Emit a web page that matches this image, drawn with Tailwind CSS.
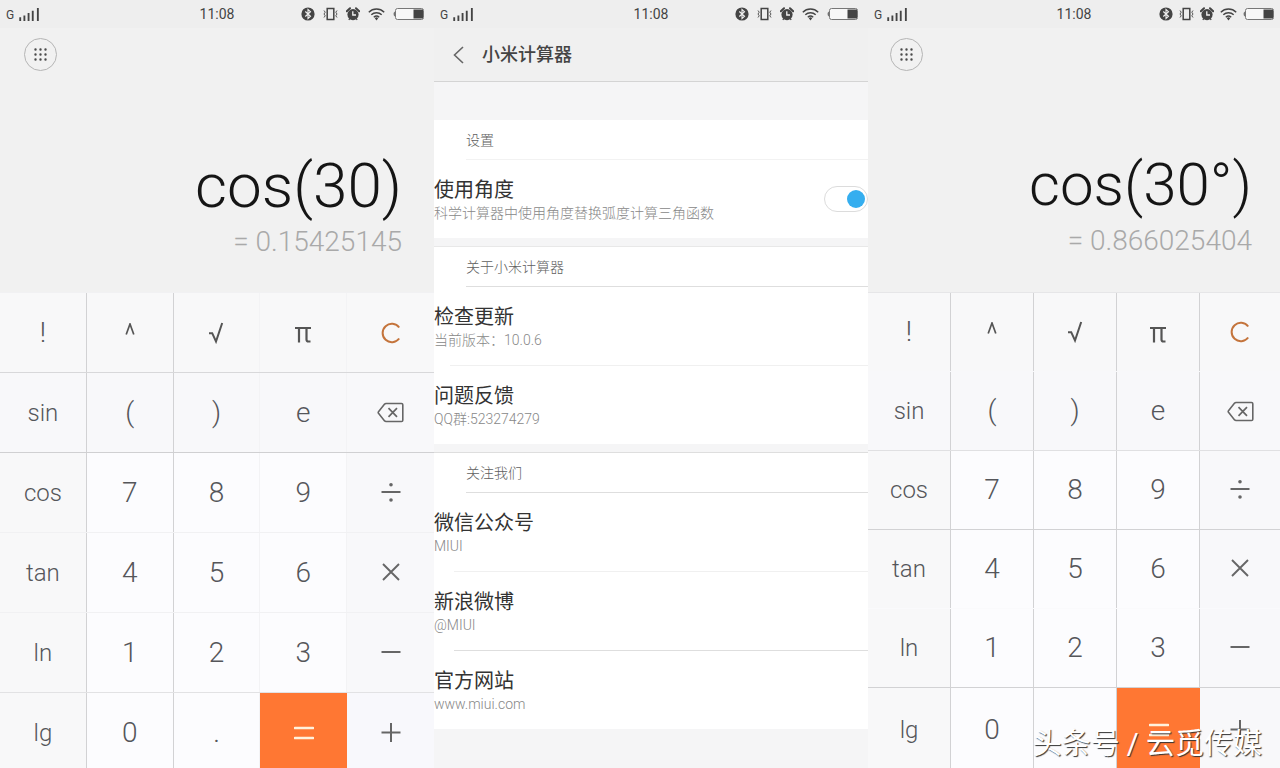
<!DOCTYPE html>
<html lang="zh-CN">
<head>
  <meta charset="UTF-8">
  <meta name="viewport" content="width=device-width, initial-scale=1.0">
  <title>小米计算器</title>
  <script src="https://cdn.jsdelivr.net/npm/@tailwindcss/browser@4"></script>
</head>
<body class="h-screen overflow-hidden bg-[#f1f1f1] font-['Roboto','Noto_Sans_CJK_SC',sans-serif] font-light text-[#55565a]">

  <!-- shared icons -->
  <svg class="hidden">
    <symbol id="signal" viewBox="0 0 23 14">
      <path d="M1.5 14v-4M6 14V8M10.500 14V5.500M15 14V3M20.500 14V0" fill="none" stroke="#444" stroke-width="2"/>
    </symbol>
    <symbol id="bluetooth" viewBox="0 0 14 14">
      <circle cx="7" cy="7" r="6.600" fill="#444"/>
      <path d="M4.300 4.500l5.200 4.800L7 11.500v-9l2.500 2.200-5.200 4.800" fill="none" stroke="#f1f1f1" stroke-width="1.100"/>
    </symbol>
    <symbol id="vibrate" viewBox="0 0 15 14">
      <rect x="4.200" y="1.500" width="6.600" height="11" fill="none" stroke="#444" stroke-width="1.500"/>
      <path d="M1 3.500l1.200 1.700L1 7l1.200 1.800L1 10.500M14 3.500l-1.200 1.700L14 7l-1.200 1.800L14 10.500" fill="none" stroke="#555" stroke-width="1"/>
    </symbol>
    <symbol id="alarm" viewBox="0 0 14 14">
      <circle cx="7" cy="7.600" r="5.600" fill="#444"/>
      <path d="M.8 4.200L4 1.200M13.200 4.200L10 1.200" stroke="#444" stroke-width="2" stroke-linecap="round"/>
      <path d="M2.800 12.800l1-1.200M11.200 12.800l-1-1.200" stroke="#444" stroke-width="1.300"/>
      <path d="M6.800 4.300v3.700h3.200" fill="none" stroke="#f1f1f1" stroke-width="1.300"/>
    </symbol>
    <symbol id="wifi" viewBox="0 0 17 14">
      <path d="M.8 5.200a11 11 0 0 1 15.400 0M3.300 7.800a7.500 7.500 0 0 1 10.400 0M5.800 10.200a4 4 0 0 1 5.400 0" fill="none" stroke="#444" stroke-width="1.400"/>
      <path d="M6.800 11.300a2.300 2.300 0 0 1 3.400 0L8.500 13.400z" fill="#444"/>
    </symbol>
    <symbol id="battery" viewBox="0 0 31 14">
      <path d="M1.800 4.500C.2 5.500.2 8.500 1.800 9.500z" fill="#555"/>
      <rect x="2.500" y="1.500" width="28" height="11" rx="2" fill="#f8f8f8" stroke="#777"/>
      <path d="M20.500 2.500h9.500v9h-9.500z" fill="#444"/>
    </symbol>
    <symbol id="dots" viewBox="0 0 13 13">
      <path d="M1.500 1.500h.01M6.500 1.500h.01M11.500 1.500h.01M1.500 6.500h.01M6.500 6.500h.01M11.500 6.500h.01M1.500 11.500h.01M6.500 11.500h.01M11.500 11.500h.01" stroke="#4a4a4a" stroke-width="2.400" stroke-linecap="round"/>
    </symbol>
    <symbol id="sqrt" viewBox="0 0 16 22">
      <path d="M1 11.200h3.200L8 19.500 14.200 1" fill="none" stroke="#555" stroke-width="2"/>
    </symbol>
    <symbol id="caret" viewBox="0 0 10 12">
      <path d="M1.200 11.500L5 1l3.800 10.500" fill="none" stroke="#555" stroke-width="1.700"/>
    </symbol>
    <symbol id="pi" viewBox="0 0 16 17">
      <path d="M0 2h16M4 2v14.500M11.500 2v11.500q0 2 2 2h2" fill="none" stroke="#555" stroke-width="2.200"/>
    </symbol>
    <symbol id="clear" viewBox="0 0 20 22">
      <path d="M18.200 5.500A9.200 9.200 0 1 0 18.200 16.500" fill="none" stroke="#c4743c" stroke-width="2"/>
    </symbol>
    <symbol id="delete" viewBox="0 0 27 21">
      <path d="M9 1.500h15.500q1.300 0 1.300 1.300v15.400q0 1.300-1.300 1.300H9q-.8 0-1.400-.6L1.500 11.300q-.6-.8 0-1.600l6.100-7.600q.6-.6 1.400-.6z" fill="none" stroke="#666" stroke-width="1.600"/>
      <path d="M11.500 6.200l8.500 8.600M20 6.200l-8.500 8.600" stroke="#666" stroke-width="1.700"/>
    </symbol>
    <symbol id="divide" viewBox="0 0 20 20">
      <path d="M.5 9h19" stroke="#666" stroke-width="2"/>
      <circle cx="10" cy="1.800" r="1.800" fill="#666"/>
      <circle cx="10" cy="17" r="1.800" fill="#666"/>
    </symbol>
    <symbol id="times" viewBox="0 0 20 20">
      <path d="M2 1l16 16M18 1L2 17" stroke="#666" stroke-width="1.900"/>
    </symbol>
    <symbol id="minus" viewBox="0 0 20 20">
      <path d="M.5 9h19" stroke="#666" stroke-width="2"/>
    </symbol>
    <symbol id="plus" viewBox="0 0 20 20">
      <path d="M.5 9.500h19M10 0v19" stroke="#666" stroke-width="2"/>
    </symbol>
    <symbol id="equals" viewBox="0 0 20 20">
      <path d="M1 5h18M1 15h18" stroke="#fff1dc" stroke-width="2.600" stroke-linecap="round"/>
    </symbol>
  </svg>

  <main class="grid h-full grid-cols-[434fr_434fr_412fr]">

    <!-- Radians calculator -->
    <section class="min-w-0">
      <div class="grid h-7 grid-cols-[1fr_auto_1fr] items-center bg-[#eeeeee] px-[6px] text-[#444]">
        <div class="flex items-end gap-1"><span class="text-[12px] leading-3 font-normal">G</span><svg class="h-[13px] w-[23px]"><use href="#signal"/></svg></div>
        <time class="text-sm font-normal">11:08</time>
        <div class="flex items-center justify-end gap-2 pr-1">
          <svg class="h-[14px] w-[14px]"><use href="#bluetooth"/></svg>
          <svg class="h-[14px] w-[15px]"><use href="#vibrate"/></svg>
          <svg class="h-[14px] w-[14px]"><use href="#alarm"/></svg>
          <svg class="h-[14px] w-[17px]"><use href="#wifi"/></svg>
          <svg class="h-[14px] w-[31px]"><use href="#battery"/></svg>
        </div>
      </div>
      <div class="flex h-[264px] flex-col justify-between pt-[10px] pb-[34px] pl-6 pr-8">
        <button class="flex size-[33px] items-center justify-center rounded-full border border-[#b5b5b5]" aria-label="菜单"><svg class="size-[13px]"><use href="#dots"/></svg></button>
        <div class="flex flex-col gap-2 text-right">
          <p class="text-[62px] leading-[64px] text-[#151515]">cos(30)</p>
          <p class="text-[28px] leading-8 text-[#a9a9a9]">= 0.15425145</p>
        </div>
      </div>
      <div class="text-[28px] *:grid *:h-20 *:grid-cols-5 *:border-t *:border-[#f1f1f3] *:*:flex *:*:items-center *:*:justify-center *:*:border-r *:*:border-[#d2d2d4] *:*:nth-[3]:border-[#f3f3f5] *:*:nth-[4]:border-[#f3f3f5] *:*:last:border-r-0">
        <div class="bg-[#f8f8f9]">
          <button>!</button>
          <button aria-label="^"><svg class="mb-2 h-3 w-[10px]"><use href="#caret"/></svg></button>
          <button aria-label="√"><svg class="h-[22px] w-4"><use href="#sqrt"/></svg></button>
          <button aria-label="π"><svg class="mt-1 h-[17px] w-4"><use href="#pi"/></svg></button>
          <button aria-label="C"><svg class="h-[22px] w-5"><use href="#clear"/></svg></button>
        </div>
        <div class="border-[#d8d8da]! bg-[#f8f8fa]">
          <button class="text-2xl">sin</button>
          <button>(</button>
          <button>)</button>
          <button>e</button>
          <button aria-label="删除"><svg class="h-[21px] w-[27px]"><use href="#delete"/></svg></button>
        </div>
        <div class="border-[#d0d0d2]! bg-[#fcfcfe]">
          <button class="bg-[#f8f8f9] text-2xl">cos</button>
          <button>7</button>
          <button>8</button>
          <button>9</button>
          <button class="bg-[#f8f8fa]" aria-label="÷"><svg class="size-5"><use href="#divide"/></svg></button>
        </div>
        <div class="bg-[#fcfcfe]">
          <button class="bg-[#f8f8f9] text-2xl">tan</button>
          <button>4</button>
          <button>5</button>
          <button>6</button>
          <button class="bg-[#f8f8fa]" aria-label="×"><svg class="size-5"><use href="#times"/></svg></button>
        </div>
        <div class="bg-[#fcfcfe]">
          <button class="bg-[#f8f8f9] text-2xl">ln</button>
          <button>1</button>
          <button>2</button>
          <button>3</button>
          <button class="bg-[#f8f8fa]" aria-label="−"><svg class="size-5"><use href="#minus"/></svg></button>
        </div>
        <div class="border-[#e2e2e4]! bg-[#fcfcfe]">
          <button class="bg-[#f8f8f9] text-2xl">lg</button>
          <button>0</button>
          <button>.</button>
          <button class="border-r-0! bg-[#ff7733]" aria-label="="><svg class="size-5"><use href="#equals"/></svg></button>
          <button class="bg-[#f8f8fc]" aria-label="+"><svg class="size-5"><use href="#plus"/></svg></button>
        </div>
      </div>
    </section>

    <!-- Settings -->
    <section class="min-w-0 bg-[#f5f5f6]">
      <div class="grid h-7 grid-cols-[1fr_auto_1fr] items-center bg-[#eeeeee] px-[6px] text-[#444]">
        <div class="flex items-end gap-1"><span class="text-[12px] leading-3 font-normal">G</span><svg class="h-[13px] w-[23px]"><use href="#signal"/></svg></div>
        <time class="text-sm font-normal">11:08</time>
        <div class="flex items-center justify-end gap-2 pr-1">
          <svg class="h-[14px] w-[14px]"><use href="#bluetooth"/></svg>
          <svg class="h-[14px] w-[15px]"><use href="#vibrate"/></svg>
          <svg class="h-[14px] w-[14px]"><use href="#alarm"/></svg>
          <svg class="h-[14px] w-[17px]"><use href="#wifi"/></svg>
          <svg class="h-[14px] w-[31px]"><use href="#battery"/></svg>
        </div>
      </div>
      <header class="flex h-[54px] items-center gap-[18px] border-b border-[#d4d4d4] bg-[#f0f0f0] pl-[19px]">
        <button aria-label="返回">
          <svg class="h-[18px] w-[11px]" viewBox="0 0 11 18"><path d="M10 1L1.500 9l8.500 8" fill="none" stroke="#666" stroke-width="1.600"/></svg>
        </button>
        <h1 class="text-lg font-medium text-[#444]">小米计算器</h1>
      </header>

      <div class="mt-[38px] bg-white">
        <h2 class="ml-8 flex h-10 items-center border-b border-[#f2f2f2] text-sm text-[#606060]">设置</h2>
        <div class="flex h-[78px] items-center justify-between">
          <label for="degrees" class="pt-[5px]">
            <span class="block text-xl leading-6 font-normal text-[#333]">使用角度</span>
            <span class="block text-sm leading-[23px] text-[#888]">科学计算器中使用角度替换弧度计算三角函数</span>
          </label>
          <input id="degrees" type="checkbox" role="switch" checked class="flex h-[26px] w-11 appearance-none items-center justify-end rounded-full border border-[#dcdcdc] bg-white pr-[2px] before:size-[18px] before:rounded-full before:bg-[#35aeef]">
        </div>
      </div>

      <div class="mt-2 border-t border-[#e8e8e8] bg-white">
        <h2 class="ml-8 flex h-10 items-center border-b border-[#dedede] text-sm text-[#606060]">关于小米计算器</h2>
        <a href="#update" class="flex h-[78px] flex-col justify-center pt-[5px]">
          <span class="text-xl leading-6 font-normal text-[#333]">检查更新</span>
          <span class="text-sm leading-[23px] text-[#888]">当前版本：10.0.6</span>
        </a>
        <hr class="ml-4 border-[#f0f0f0]">
        <a href="#feedback" class="flex h-[78px] flex-col justify-center pt-[5px]">
          <span class="text-xl leading-6 font-normal text-[#333]">问题反馈</span>
          <span class="text-sm leading-[23px] text-[#888]">QQ群:523274279</span>
        </a>
      </div>

      <div class="mt-2 border-t border-[#dedede] bg-white">
        <h2 class="ml-8 flex h-10 items-center border-b border-[#dedede] text-sm text-[#606060]">关注我们</h2>
        <a href="#wechat" class="flex h-[78px] flex-col justify-center pt-[5px]">
          <span class="text-xl leading-6 font-normal text-[#333]">微信公众号</span>
          <span class="text-sm leading-[23px] text-[#888]">MIUI</span>
        </a>
        <hr class="ml-5 border-[#f0f0f0]">
        <a href="#weibo" class="flex h-[78px] flex-col justify-center pt-[5px]">
          <span class="text-xl leading-6 font-normal text-[#333]">新浪微博</span>
          <span class="text-sm leading-[23px] text-[#888]">@MIUI</span>
        </a>
        <hr class="ml-5 border-[#dedede]">
        <a href="#site" class="flex h-[78px] flex-col justify-center pt-[5px]">
          <span class="text-xl leading-6 font-normal text-[#333]">官方网站</span>
          <span class="text-sm leading-[23px] text-[#888]">www.miui.com</span>
        </a>
      </div>
    </section>

    <!-- Degrees calculator -->
    <section class="relative min-w-0 overflow-hidden">
      <div class="grid h-7 grid-cols-[1fr_auto_1fr] items-center bg-[#eeeeee] px-[6px] text-[#444]">
        <div class="flex items-end gap-1"><span class="text-[12px] leading-3 font-normal">G</span><svg class="h-[13px] w-[23px]"><use href="#signal"/></svg></div>
        <time class="text-sm font-normal">11:08</time>
        <div class="flex items-center justify-end gap-[6px]">
          <svg class="h-[14px] w-[14px]"><use href="#bluetooth"/></svg>
          <svg class="h-[14px] w-[15px]"><use href="#vibrate"/></svg>
          <svg class="h-[14px] w-[14px]"><use href="#alarm"/></svg>
          <svg class="h-[14px] w-[17px]"><use href="#wifi"/></svg>
          <svg class="h-[14px] w-[31px]"><use href="#battery"/></svg>
        </div>
      </div>
      <div class="flex h-[264px] flex-col justify-between pt-[10px] pb-[35px] pl-[22px] pr-7">
        <button class="flex size-[33px] items-center justify-center rounded-full border border-[#b5b5b5]" aria-label="菜单"><svg class="size-[13px]"><use href="#dots"/></svg></button>
        <div class="flex flex-col gap-2 text-right">
          <p class="text-[60px] leading-[64px] text-[#151515]">cos(30°)</p>
          <p class="text-[28px] leading-8 text-[#a9a9a9]">= 0.866025404</p>
        </div>
      </div>
      <div class="text-[28px] *:grid *:h-[79px] *:grid-cols-[83fr_83fr_83fr_83fr_80fr] *:border-t *:border-[#d2d2d4] *:*:flex *:*:items-center *:*:justify-center *:*:border-r *:*:border-[#d2d2d4] *:*:last:border-r-0">
        <div class="border-[#e6e6e8]! bg-[#f8f8f9]">
          <button>!</button>
          <button aria-label="^"><svg class="mb-2 h-3 w-[10px]"><use href="#caret"/></svg></button>
          <button aria-label="√"><svg class="h-[22px] w-4"><use href="#sqrt"/></svg></button>
          <button aria-label="π"><svg class="mt-1 h-[17px] w-4"><use href="#pi"/></svg></button>
          <button aria-label="C"><svg class="h-[22px] w-5"><use href="#clear"/></svg></button>
        </div>
        <div class="border-[#f8f8fa]! bg-[#f8f8fa]">
          <button class="text-2xl">sin</button>
          <button>(</button>
          <button>)</button>
          <button>e</button>
          <button aria-label="删除"><svg class="h-[21px] w-[27px]"><use href="#delete"/></svg></button>
        </div>
        <div class="border-[#e0e0e2]! bg-[#fcfcfe]">
          <button class="bg-[#f8f8f9] text-2xl">cos</button>
          <button>7</button>
          <button>8</button>
          <button>9</button>
          <button class="bg-[#f8f8fa]" aria-label="÷"><svg class="size-5"><use href="#divide"/></svg></button>
        </div>
        <div class="bg-[#fcfcfe]">
          <button class="bg-[#f8f8f9] text-2xl">tan</button>
          <button>4</button>
          <button>5</button>
          <button>6</button>
          <button class="bg-[#f8f8fa]" aria-label="×"><svg class="size-5"><use href="#times"/></svg></button>
        </div>
        <div class="border-[#fafafc]! bg-[#fcfcfe]">
          <button class="bg-[#f8f8f9] text-2xl">ln</button>
          <button>1</button>
          <button>2</button>
          <button>3</button>
          <button class="bg-[#f8f8fa]" aria-label="−"><svg class="size-5"><use href="#minus"/></svg></button>
        </div>
        <div class="h-[84px]! bg-[#fcfcfe]">
          <button class="bg-[#f8f8f9] text-2xl">lg</button>
          <button>0</button>
          <button aria-label="."></button>
          <button class="border-r-0! bg-[#ff7733]" aria-label="="><svg class="size-5"><use href="#equals"/></svg></button>
          <button class="bg-[#f8f8fa]" aria-label="+"><svg class="size-5"><use href="#plus"/></svg></button>
        </div>
      </div>
      <p class="absolute right-[18px] bottom-[10px] text-[29px] leading-9 font-normal whitespace-nowrap text-white [text-shadow:1px_1px_1px_#333]">头条号 / 云觅传媒</p>
    </section>
  </main>
</body>
</html>
